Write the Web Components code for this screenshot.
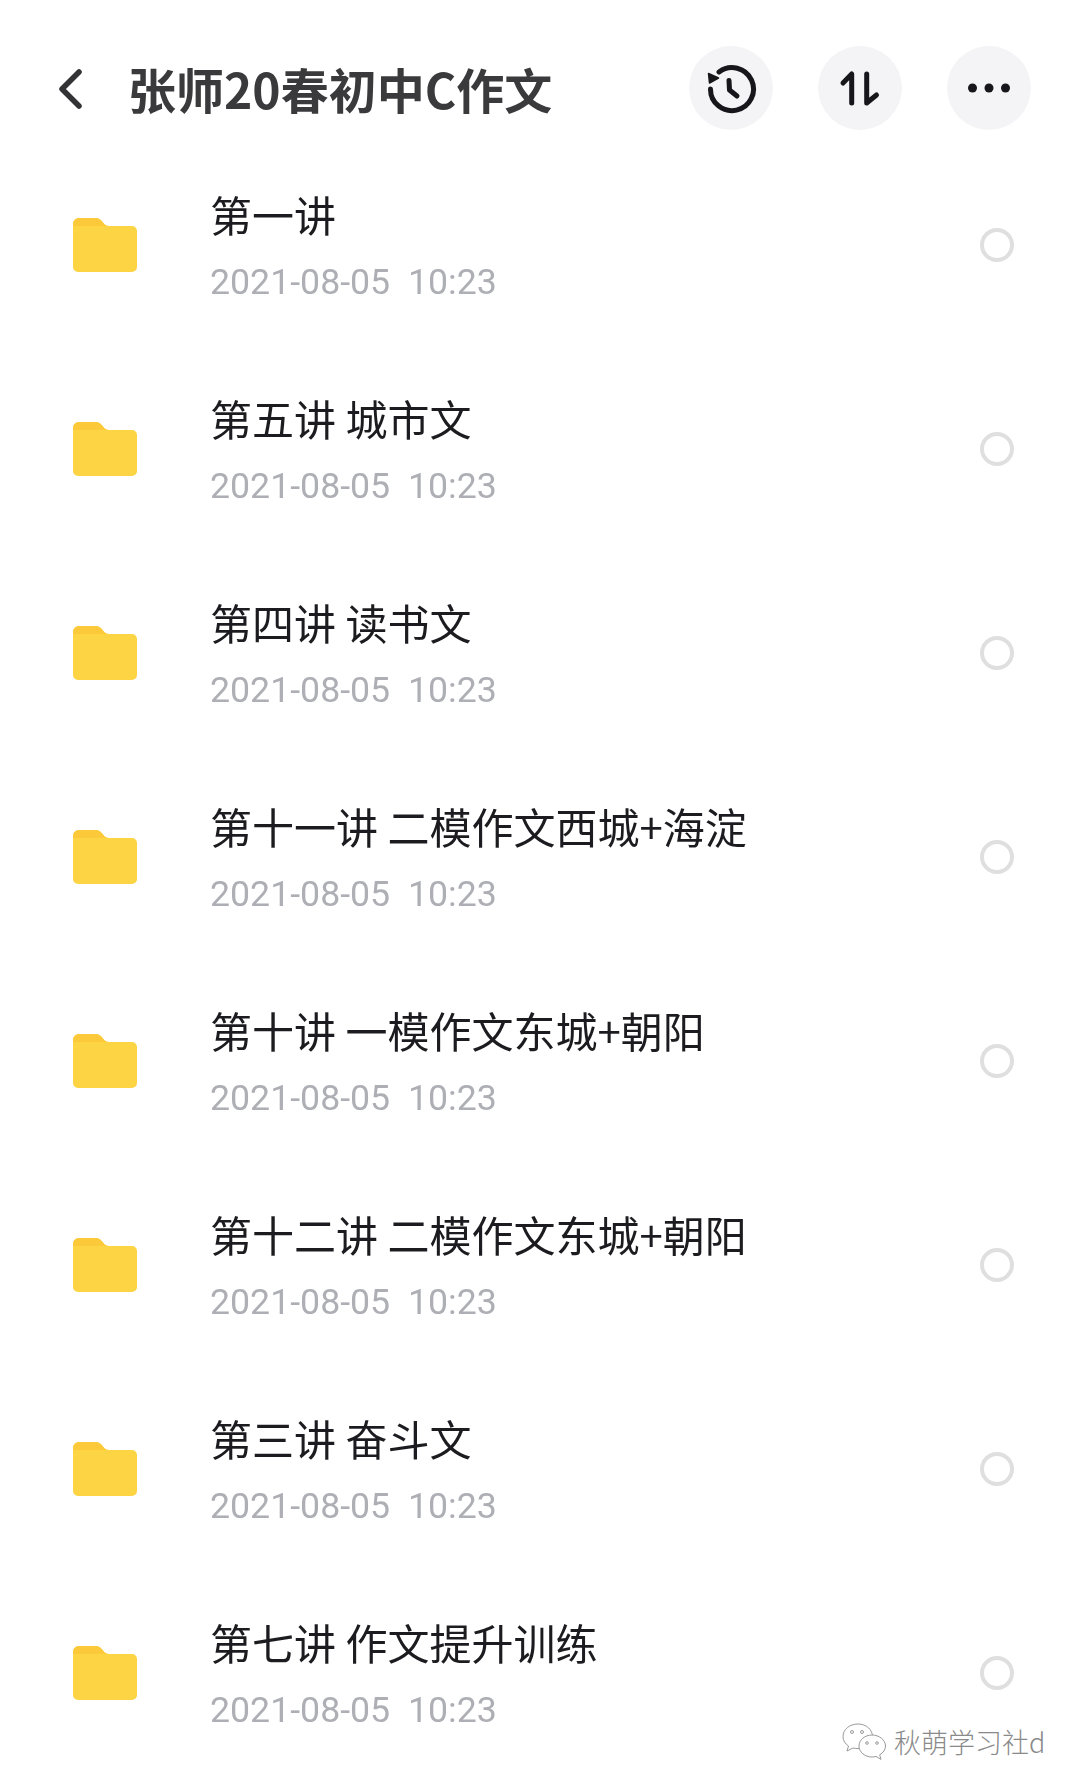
<!DOCTYPE html>
<html lang="zh-CN">
<head>
    <meta charset="UTF-8">
    <title>张师20春初中C作文</title>
    <style>
        html, body { margin: 0; padding: 0; background: #fff; }
        body { width: 1080px; height: 1792px; overflow: hidden; position: relative;
               font-family: "Noto Sans CJK SC", "Noto Sans", sans-serif; }
    </style>
</head>
<body>
    <folder-page>
        <span slot="title">张师20春初中C作文</span>
        <file-row name="第一讲"></file-row>
        <file-row name="第五讲 城市文"></file-row>
        <file-row name="第四讲 读书文"></file-row>
        <file-row name="第十一讲 二模作文西城+海淀"></file-row>
        <file-row name="第十讲 一模作文东城+朝阳"></file-row>
        <file-row name="第十二讲 二模作文东城+朝阳"></file-row>
        <file-row name="第三讲 奋斗文"></file-row>
        <file-row name="第七讲 作文提升训练"></file-row>
    </folder-page>
    <water-mark>秋萌学习社d</water-mark>

    <script>
        class RoundButton extends HTMLElement {
            constructor() {
                super();
                this.attachShadow({ mode: 'open' });
                this.shadowRoot.innerHTML = `
                    <style>
                        :host { display: flex; width: 84px; height: 84px; border-radius: 50%;
                                background: #f4f4f6; align-items: center; justify-content: center; }
                    </style>
                    <slot></slot>`;
            }
        }
        customElements.define('round-button', RoundButton);

        class FolderPage extends HTMLElement {
            constructor() {
                super();
                this.attachShadow({ mode: 'open' });
                this.shadowRoot.innerHTML = `
                    <style>
                        /* the reference is a soft, recompressed photo of a phone screen */
                        :host { display: block; filter: blur(0.5px); }
                        header { display: flex; align-items: center; height: 84px;
                                 padding: 46px 49px 13px 56px; }
                        .back { width: 30px; height: 44px; margin-right: 42px; flex: none; }
                        .title { flex: 1; font-size: 48px; font-weight: 700; color: #3a3a3c;
                                 line-height: 84px; white-space: nowrap; }
                        .actions { display: flex; gap: 45px; }
                        svg { display: block; }
                    </style>
                    <header>
                        <svg class="back" viewBox="0 0 30 44" fill="none" stroke="#333336" stroke-width="5.5" stroke-linecap="round" stroke-linejoin="round">
                            <path d="M23 6 6 23l17 17"/>
                        </svg>
                        <div class="title"><slot name="title"></slot></div>
                        <div class="actions">
                            <round-button>
                                <svg width="54" height="54" viewBox="0 0 54 54" fill="none" stroke="#17171b" stroke-width="5" stroke-linecap="round" stroke-linejoin="round">
                                    <path d="M6.500 28A21.500 21.500 0 1 0 15 11"/>
                                    <path d="M4.500 12.500 5.500 22 14.500 17z" fill="#17171b" stroke-width="1.500"/>
                                    <path d="M25 19.500 25.500 29 33 35"/>
                                </svg>
                            </round-button>
                            <round-button>
                                <svg width="44" height="44" viewBox="0 0 44 44" fill="none" stroke="#17171b" stroke-width="5" stroke-linecap="round" stroke-linejoin="round">
                                    <path d="M5 17 13.700 8v29"/>
                                    <path d="M28.700 8v29L38.500 29"/>
                                </svg>
                            </round-button>
                            <round-button>
                                <svg width="44" height="12" viewBox="0 0 44 12" fill="#17171b">
                                    <circle cx="5.500" cy="6" r="4.500"/>
                                    <circle cx="22" cy="6" r="4.500"/>
                                    <circle cx="38.500" cy="6" r="4.500"/>
                                </svg>
                            </round-button>
                        </div>
                    </header>
                    <slot></slot>`;
            }
        }
        customElements.define('folder-page', FolderPage);

        class FileRow extends HTMLElement {
            constructor() {
                super();
                this.attachShadow({ mode: 'open' });
                this.shadowRoot.innerHTML = `
                    <style>
                        :host { display: flex; align-items: center; height: 204px; box-sizing: border-box;
                                padding: 0 66px 0 73px; }
                        .folder { width: 64px; height: 56px; flex: none; display: block; margin-right: 73px; }
                        .text { flex: 1; min-width: 0; padding-bottom: 2px; }
                        .name { font-size: 42px; line-height: 56px; color: #1c1c20; white-space: pre; }
                        .date { font-family: Roboto, "Noto Sans", sans-serif; font-size: 35.7px; line-height: 42px;
                                margin-top: 19px; color: #adafb5; white-space: pre; }
                        .radio { width: 34px; height: 34px; box-sizing: border-box; flex: none;
                                 border: 4px solid #dfdfe0; border-radius: 50%; }
                    </style>
                    <svg class="folder" viewBox="0 0 64 56">
                        <path d="M0 7a6 6 0 0 1 6-6h16c4 0 6 2 8 4.500 1.500 2 3 3.500 6 3.500h23a5 5 0 0 1 5 5V50a5 5 0 0 1-5 5H5a5 5 0 0 1-5-5z" fill="#fdd444"/>
                        <path d="M0 7a6 6 0 0 1 6-6h16c4 0 6 2 8 4.500 1.500 2 3 3.500 6 3.500H0z" fill="#fbc93a"/>
                    </svg>
                    <div class="text">
                        <div class="name"></div>
                        <div class="date"></div>
                    </div>
                    <div class="radio"></div>`;
            }

            connectedCallback() {
                this.shadowRoot.querySelector('.name').textContent = this.getAttribute('name');
                this.shadowRoot.querySelector('.date').textContent = this.getAttribute('date') || '2021-08-05  10:23';
            }
        }
        customElements.define('file-row', FileRow);

        // sits on top of the last row, bottom right corner
        class WaterMark extends HTMLElement {
            constructor() {
                super();
                this.attachShadow({ mode: 'open' });
                this.shadowRoot.innerHTML = `
                    <style>
                        :host { position: absolute; left: 842px; top: 1723px; display: flex; align-items: center;
                                gap: 8px; font-size: 27px; line-height: 38px; color: #8a8a8a; font-weight: 300; }
                        svg { display: block; }
                    </style>
                    <svg width="44" height="38" viewBox="0 0 44 38" fill="#fff" stroke="#9a9a9a" stroke-width="1">
                        <path d="M16 1C7.500 1 1 6.500 1 13.500c0 4 2.200 7.300 5.500 9.500L5 28l6-3c1.500.4 3 .6 5 .6 8.500 0 14.500-5.500 14.500-12.100S24.500 1 16 1z"/>
                        <path d="M30 12c-7 0-13 4.800-13 11s6 11 13 11c1.400 0 2.800-.2 4-.6l5 3-1.300-4.600c3.500-2 5.800-5.200 5.800-8.800C43.500 16.800 37 12 30 12z"/>
                        <circle cx="10" cy="9" r="1.500" fill="none"/>
                        <circle cx="20" cy="9" r="1.500" fill="none"/>
                        <circle cx="25" cy="20" r="1.300" fill="none"/>
                        <circle cx="35" cy="20" r="1.300" fill="none"/>
                    </svg>
                    <slot></slot>`;
            }
        }
        customElements.define('water-mark', WaterMark);
    </script>
</body>
</html>
